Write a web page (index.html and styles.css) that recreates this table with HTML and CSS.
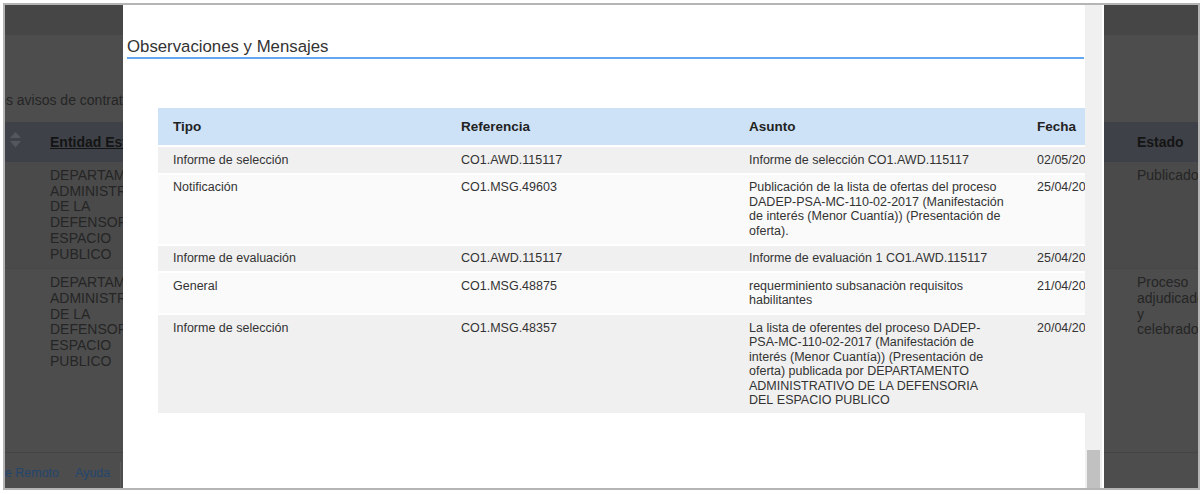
FILE: index.html
```html
<!DOCTYPE html>
<html lang="es">
<head>
<meta charset="utf-8">
<title>Observaciones y Mensajes</title>
<link rel="stylesheet" href="styles.css">
</head>
<body>
<div class="frame">
  <div class="page">
    <div class="topbar"></div>
    <p class="intro">los avisos de contratación publicados en el sistema</p>
    <div class="bg-row bg-head">
      <div class="col-sort">
        <svg class="sort-icon" width="11" height="16" viewBox="0 0 11 16"><path d="M5.5 0 L11 6 L0 6 Z"/><path d="M0 9 L11 9 L5.5 15.5 Z"/></svg>
      </div>
      <div class="col-ent"><a class="sort-link">Entidad Estatal</a></div>
      <div class="col-mid"></div>
      <div class="col-est">Estado</div>
    </div>
    <div class="bg-row bg-data shade">
      <div class="col-sort"></div>
      <div class="col-ent">DEPARTAMENTO ADMINISTRATIVO DE LA DEFENSORIA DEL ESPACIO PUBLICO</div>
      <div class="col-mid"></div>
      <div class="col-est">Publicado</div>
    </div>
    <div class="bg-row bg-data last">
      <div class="col-sort"></div>
      <div class="col-ent">DEPARTAMENTO ADMINISTRATIVO DE LA DEFENSORIA DEL ESPACIO PUBLICO</div>
      <div class="col-mid"></div>
      <div class="col-est">Proceso adjudicado y celebrado</div>
    </div>
    <div class="footer">
      <a class="foot-link first">Soporte Remoto</a>
      <a class="foot-link">Ayuda</a>
      <span class="foot-sep"></span>
    </div>
  </div>

  <div class="modal">
    <div class="modal-body">
      <h2 class="modal-title">Observaciones y Mensajes</h2>
      <table class="msg-table">
        <colgroup><col><col><col><col></colgroup>
        <thead>
          <tr><th>Tipo</th><th>Referencia</th><th>Asunto</th><th>Fecha</th></tr>
        </thead>
        <tbody>
          <tr class="odd"><td>Informe de selección</td><td>CO1.AWD.115117</td><td>Informe de selección CO1.AWD.115117</td><td>02/05/2017</td></tr>
          <tr class="even"><td>Notificación</td><td>CO1.MSG.49603</td><td>Publicación de la lista de ofertas del proceso DADEP-PSA-MC-110-02-2017 (Manifestación de interés (Menor Cuantía)) (Presentación de oferta).</td><td>25/04/2017</td></tr>
          <tr class="odd"><td>Informe de evaluación</td><td>CO1.AWD.115117</td><td>Informe de evaluación 1 CO1.AWD.115117</td><td>25/04/2017</td></tr>
          <tr class="even"><td>General</td><td>CO1.MSG.48875</td><td>requerminiento subsanaciòn requisitos habilitantes</td><td>21/04/2017</td></tr>
          <tr class="odd"><td>Informe de selección</td><td>CO1.MSG.48357</td><td>La lista de oferentes del proceso DADEP-PSA-MC-110-02-2017 (Manifestación de interés (Menor Cuantía)) (Presentación de oferta) publicada por DEPARTAMENTO ADMINISTRATIVO DE LA DEFENSORIA DEL&nbsp;ESPACIO PUBLICO</td><td>20/04/2017</td></tr>
        </tbody>
      </table>
    </div>
    <div class="scrollbar"><div class="thumb"></div></div>
  </div>
</div>
</body>
</html>
```

FILE: styles.css
```css
* { box-sizing: border-box; }
html, body { margin: 0; padding: 0; background: #fff; }
body { font-family: "Liberation Sans", Arial, sans-serif; }

.frame {
  position: relative;
  margin: 3px 0 0 3px;
  width: 1197px;
  height: 487px;
  border: 2px solid #b5b5b5;
  overflow: hidden;
}

/* background page (dimmed) */
.page {
  height: 100%;
  display: flex;
  flex-direction: column;
  background: #4d4d4d;
  color: #252525;
  font-size: 14px;
  overflow: hidden;
}
.topbar { flex: none; height: 30px; background: #464646; }
.intro {
  margin: 57px 0 14px;
  line-height: 16px;
  text-indent: -10px;
  white-space: nowrap;
}
.bg-row { display: flex; flex: none; }
.bg-head {
  height: 40px;
  align-items: center;
  background: #3e4248;
  font-weight: bold;
  color: #141414;
}
.bg-data {
  padding: 6px 0;
  line-height: 15.7px;
  border-bottom: 1px solid #464646;
}
.bg-data.last { border-bottom: 0; }
.bg-data.shade { background: #4a4a4a; }
.col-sort { flex: none; width: 40px; padding-left: 5px; display: flex; align-items: center; }
.col-ent { flex: none; width: 135px; padding: 0 5px; }
.col-mid { flex: 1; }
.col-est { flex: none; width: 71px; padding-left: 10px; }
.sort-icon { fill: #54585d; margin-top: -4px; }
.sort-link { color: inherit; text-decoration: underline; white-space: nowrap; }

.footer {
  margin-top: auto;
  flex: none;
  height: 36px;
  padding-top: 5px;
  border-top: 1px solid #454545;
  display: flex;
  align-items: center;
  font-size: 12.5px;
  line-height: 16px;
}
.foot-link { color: #24466e; white-space: nowrap; }
.foot-link.first { margin-left: -37px; }
.foot-link + .foot-link { margin-left: 16px; }
.foot-sep {
  align-self: flex-end;
  margin-left: 10px;
  height: 26px;
  border-left: 1px solid #5c5c5c;
}

/* modal dialog */
.modal {
  position: absolute;
  left: 118px;
  top: 0;
  bottom: 0;
  width: 981px;
  background: #fff;
  display: flex;
  padding-right: 2px;
}
.modal-body {
  flex: 1;
  min-width: 0;
  overflow: hidden;
  padding-top: 32px;
}
.modal-title {
  margin: 0 1px 0 4px;
  font-size: 16.8px;
  line-height: 20px;
  font-weight: normal;
  color: #333;
  border-bottom: 2px solid #64a7f0;
}
.msg-table {
  margin: 49px 0 0 35px;
  border-collapse: separate;
  border-spacing: 0;
  table-layout: fixed;
  width: 1152px;
  min-width: 1152px;
  color: #333;
}
.msg-table col { width: 288px; }
.msg-table th {
  padding: 11px 15px;
  line-height: 15px;
  font-size: 13.5px;
  font-weight: bold;
  color: #222;
  text-align: left;
  background: #cee2f7;
  border-bottom: 2px solid #fff;
}
.msg-table td {
  padding: 5.5px 15px;
  font-size: 12.5px;
  line-height: 14.5px;
  vertical-align: top;
  text-align: left;
  border-bottom: 2px solid #fff;
}
.msg-table tr.odd td { background: #f0f0f0; }
.msg-table tr.even td { background: #fafafa; }

.scrollbar {
  flex: none;
  width: 17px;
  background: #f0f0f0;
  display: flex;
  flex-direction: column;
  justify-content: flex-end;
}
.thumb { height: 38px; margin: 0 2px; background: #c1c1c1; }
```
